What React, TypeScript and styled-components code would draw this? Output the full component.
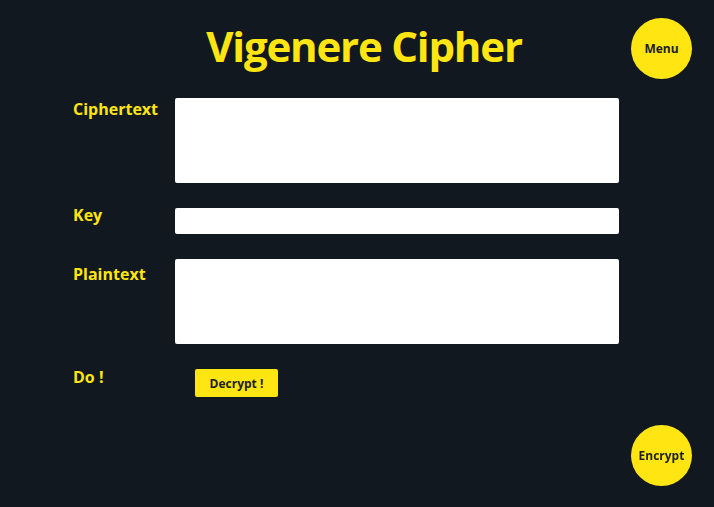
import React, { useState } from 'react';
import styled, { createGlobalStyle } from 'styled-components';

const GlobalStyle = createGlobalStyle`
  body {
    margin: 0;
    padding: 0;
    background: #111820;
    font-family: 'Open Sans', 'Liberation Sans', sans-serif;
  }
`;

const Page = styled.div`
  position: relative;
  min-height: 100vh;
  box-sizing: border-box;
  padding-top: 17px;
`;

const Title = styled.h1`
  margin: 0;
  padding-left: 14px;
  text-align: center;
  font-size: 42px;
  font-weight: 700;
  letter-spacing: -1.2px;
  line-height: 57px;
  color: #ffe512;
`;

const RoundButton = styled.button<{ $corner: 'top' | 'bottom' }>`
  position: ${({ $corner }) => ($corner === 'top' ? 'absolute' : 'fixed')};
  ${({ $corner }) => ($corner === 'top' ? 'top: 18px;' : 'bottom: 21px;')}
  right: 22px;
  width: 61px;
  height: 61px;
  border: none;
  border-radius: 50%;
  padding: 0;
  background: #ffe512;
  color: #1c1f24;
  font-family: inherit;
  font-size: 12px;
  font-weight: 700;
  cursor: pointer;
`;

const Form = styled.div`
  display: grid;
  grid-template-columns: 102px 444px;
  row-gap: 25px;
  margin: 24px 0 0 73px;
`;

const Label = styled.label<{ $offset: number }>`
  align-self: start;
  margin-top: ${({ $offset }) => $offset}px;
  font-size: 16px;
  font-weight: 700;
  color: #ffe512;
  line-height: 22px;
`;

const TextArea = styled.textarea`
  display: block;
  box-sizing: border-box;
  width: 100%;
  height: 85px;
  border: none;
  border-radius: 2px;
  background: #fff;
  resize: none;
  outline: none;
`;

const KeyInput = styled.input`
  display: block;
  box-sizing: border-box;
  width: 100%;
  height: 26px;
  border: none;
  border-radius: 2px;
  background: #fff;
  outline: none;
`;

const ActionCell = styled.div`
  padding-left: 20px;
`;

const ActionButton = styled.button`
  width: 83px;
  height: 28px;
  border: none;
  border-radius: 2px;
  padding: 0;
  background: #ffe512;
  color: #1c1f24;
  font-family: inherit;
  font-size: 12px;
  font-weight: 700;
  cursor: pointer;
`;

const shift = (text: string, key: string, dir: number) => {
  const k = key.toLowerCase().replace(/[^a-z]/g, '');
  if (!k) return text;
  let j = 0;
  return text.replace(/[a-z]/gi, (ch) => {
    const base = ch === ch.toUpperCase() ? 65 : 97;
    const s = (k.charCodeAt(j++ % k.length) - 97) * dir;
    return String.fromCharCode(((ch.charCodeAt(0) - base + s + 26) % 26) + base);
  });
};

const App: React.FC = () => {
  const [cipher, setCipher] = useState('');
  const [key, setKey] = useState('');
  const [plain, setPlain] = useState('');

  return (
    <>
      <GlobalStyle />
      <Page>
        <Title>Vigenere Cipher</Title>
        <RoundButton $corner="top">Menu</RoundButton>
        <Form>
          <Label $offset={0}>Ciphertext</Label>
          <TextArea value={cipher} onChange={(e) => setCipher(e.target.value)} />
          <Label $offset={-4}>Key</Label>
          <KeyInput value={key} onChange={(e) => setKey(e.target.value)} />
          <Label $offset={4}>Plaintext</Label>
          <TextArea value={plain} onChange={(e) => setPlain(e.target.value)} />
          <Label $offset={-3}>Do !</Label>
          <ActionCell>
            <ActionButton onClick={() => setPlain(shift(cipher, key, -1))}>Decrypt !</ActionButton>
          </ActionCell>
        </Form>
        <RoundButton $corner="bottom">Encrypt</RoundButton>
      </Page>
    </>
  );
};

export default App;
